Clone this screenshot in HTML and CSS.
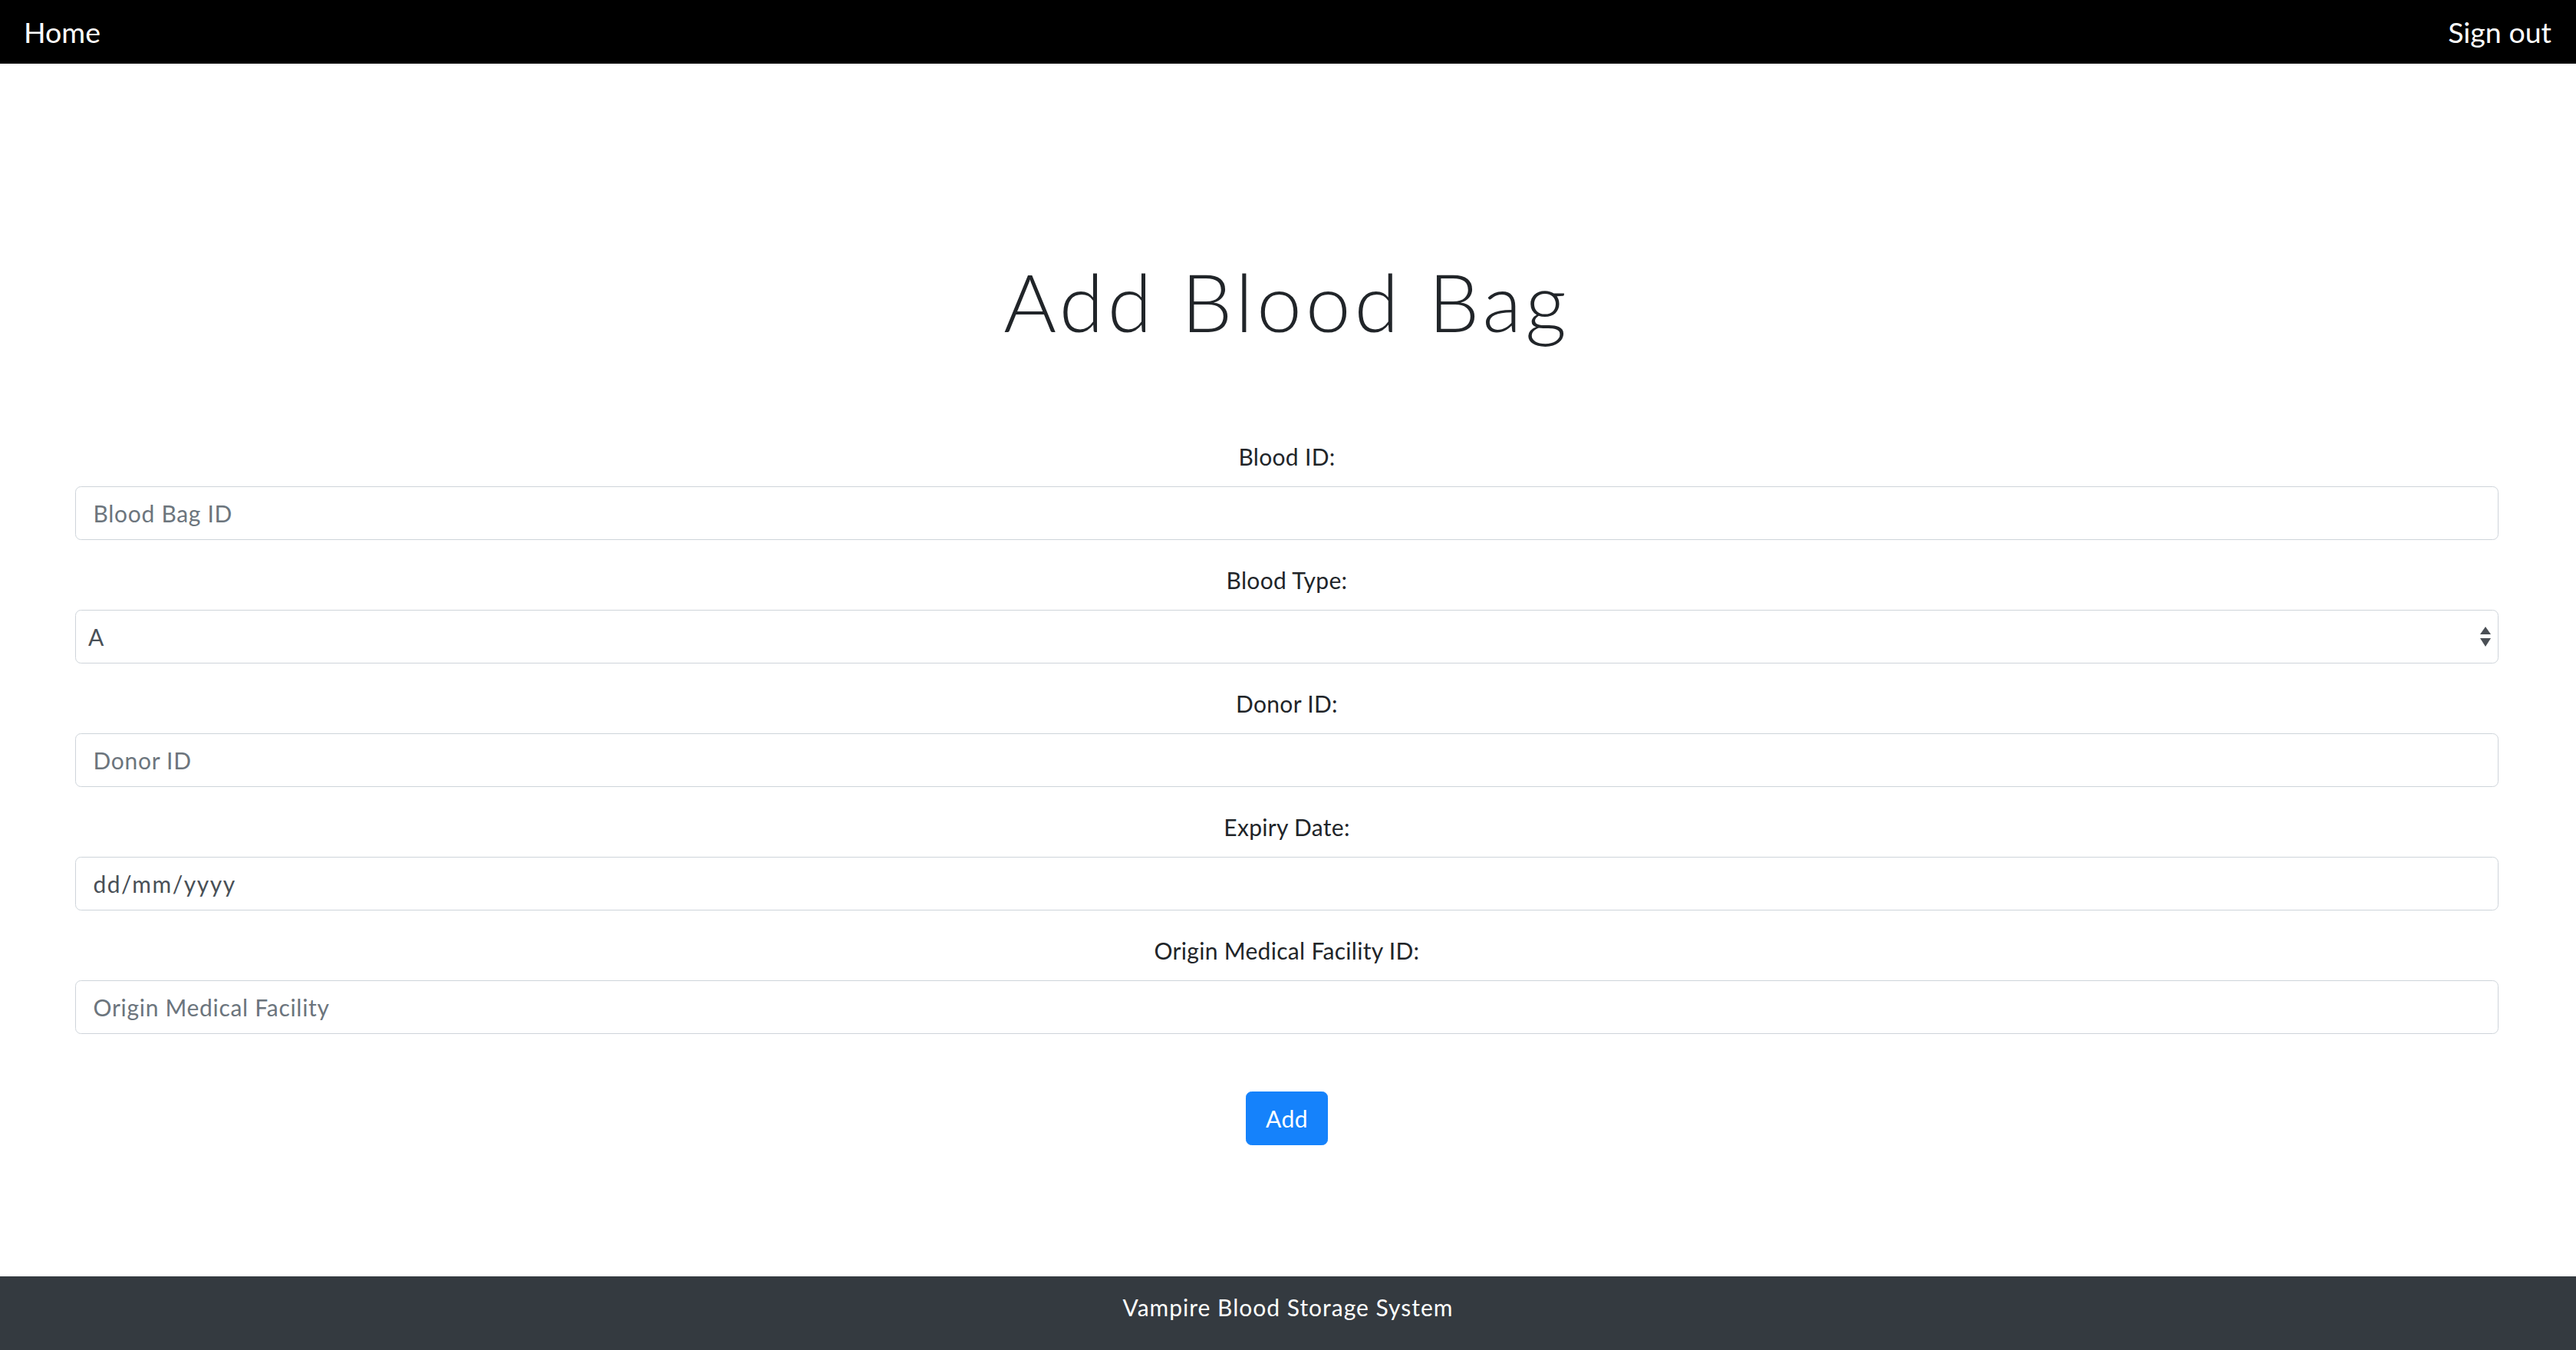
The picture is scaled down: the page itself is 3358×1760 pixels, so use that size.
FILE: index.html
```html
<!DOCTYPE html>
<html lang="en">
<head>
<meta charset="utf-8">
<title>Add Blood Bag</title>
<link rel="stylesheet" href="styles.css">
</head>
<body>
<nav class="navbar">
  <a class="nav-link" href="#">Home</a>
  <a class="nav-link" href="#">Sign out</a>
</nav>
<main class="main">
  <h1 class="title">Add Blood Bag</h1>
  <form class="form">
    <div class="form-group">
      <label class="label" for="bid">Blood ID:</label>
      <input class="control" id="bid" type="text" placeholder="Blood Bag ID">
    </div>
    <div class="form-group">
      <label class="label" for="btype">Blood Type:</label>
      <select class="control select" id="btype">
        <option>A</option>
        <option>B</option>
        <option>AB</option>
        <option>O</option>
      </select>
    </div>
    <div class="form-group">
      <label class="label" for="did">Donor ID:</label>
      <input class="control" id="did" type="text" placeholder="Donor ID">
    </div>
    <div class="form-group">
      <label class="label" for="exp">Expiry Date:</label>
      <input class="control date" id="exp" type="text" placeholder="dd/mm/yyyy">
    </div>
    <div class="form-group">
      <label class="label" for="ofid">Origin Medical Facility ID:</label>
      <input class="control" id="ofid" type="text" placeholder="Origin Medical Facility">
    </div>
    <div class="actions">
      <button class="btn" type="submit">Add</button>
    </div>
  </form>
</main>
<footer class="footer">Vampire Blood Storage System</footer>
</body>
</html>
```
FILE: styles.css
```css
* { box-sizing: border-box; }
html, body { margin: 0; padding: 0; }
body {
  min-height: 100vh;
  display: flex;
  flex-direction: column;
  font-family: "Lato", "Open Sans", sans-serif;
  font-size: 30px;
  line-height: 1.5;
  letter-spacing: 0.5px;
  color: #212529;
  background: #fff;
}
.navbar {
  height: 83px;
  background: #000;
  display: flex;
  align-items: center;
  justify-content: space-between;
  padding: 0 32px 0 31px;
}
.nav-link {
  color: #fff;
  text-decoration: none;
  font-size: 37.5px;
  line-height: 1;
  letter-spacing: 0;
}
.main {
  padding: 246px 101px 0 98px;
}
.title {
  margin: 0 0 118px;
  text-align: center;
  font-size: 105px;
  font-weight: 300;
  line-height: 1.2;
  letter-spacing: 5px;
}
.form { display: flex; flex-direction: column; }
.form-group {
  display: flex;
  flex-direction: column;
  margin-bottom: 30px;
}
.label {
  text-align: center;
  margin-bottom: 16px;
  line-height: 45px;
  letter-spacing: 0.3px;
}
.control {
  display: block;
  width: 100%;
  height: 70px;
  padding: 0 22.5px;
  font-family: inherit;
  font-size: 30px;
  letter-spacing: 0.7px;
  color: #495057;
  background: #fff;
  border: 1px solid #ced4da;
  border-radius: 7.5px;
  outline: none;
}
.control::placeholder { color: #6c757d; opacity: 1; }
.date::placeholder { color: #495057; letter-spacing: 1.5px; }
.select {
  -webkit-appearance: none;
  appearance: none;
  padding-left: 16px;
  background-image: url("data:image/svg+xml;utf8,<svg xmlns='http://www.w3.org/2000/svg' width='14' height='26' viewBox='0 0 14 26'><path d='M7 0 L14 10 L0 10 Z' fill='%234a4f55'/><path d='M0 15 L14 15 L7 26 Z' fill='%234a4f55'/></svg>");
  background-repeat: no-repeat;
  background-position: right 9px center;
  background-size: 14px 26px;
}
.actions {
  display: flex;
  justify-content: center;
  margin-top: 45px;
}
.btn {
  height: 70px;
  padding: 0 25px;
  font-family: inherit;
  font-size: 30px;
  letter-spacing: 0.5px;
  color: #fff;
  background: #1582fb;
  border: 1px solid #1582fb;
  border-radius: 7.5px;
}
.footer {
  margin-top: auto;
  height: 96px;
  background: #343a40;
  color: #fff;
  display: flex;
  align-items: flex-start;
  justify-content: center;
  padding-top: 18px;
  font-size: 30px;
  line-height: 45px;
  letter-spacing: 1px;
}
```
